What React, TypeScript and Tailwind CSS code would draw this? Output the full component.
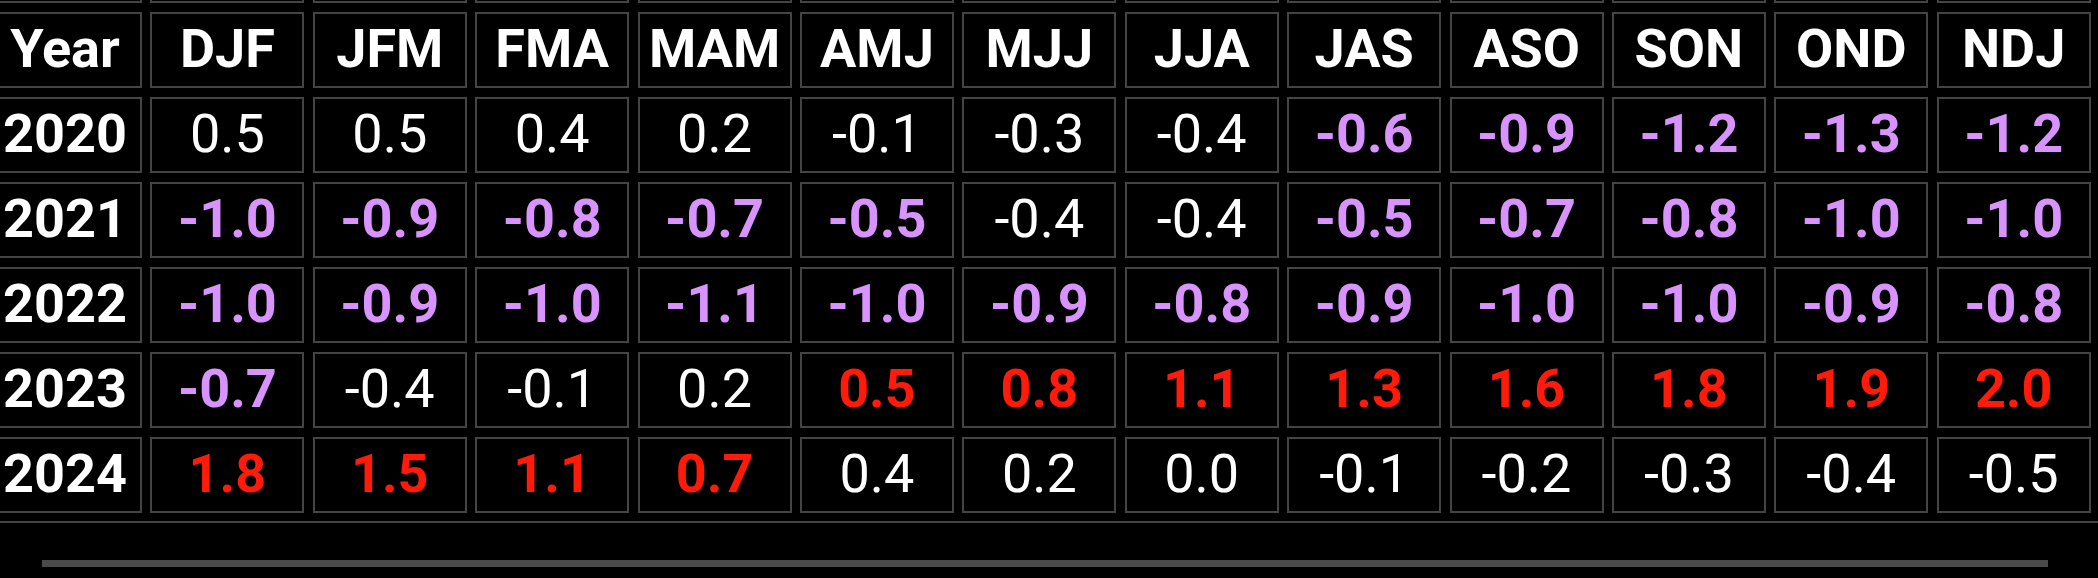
import React from "react";

type Tone = "w" | "c" | "h";

// c = La Niña (cool), h = El Niño (warm), w = neutral
const seasons = ["DJF", "JFM", "FMA", "MAM", "AMJ", "MJJ", "JJA", "JAS", "ASO", "SON", "OND", "NDJ"];

const rows: { year: string; cells: [string, Tone][] }[] = [
  {
    year: "2020",
    cells: [
      ["0.5", "w"], ["0.5", "w"], ["0.4", "w"], ["0.2", "w"], ["-0.1", "w"], ["-0.3", "w"],
      ["-0.4", "w"], ["-0.6", "c"], ["-0.9", "c"], ["-1.2", "c"], ["-1.3", "c"], ["-1.2", "c"],
    ],
  },
  {
    year: "2021",
    cells: [
      ["-1.0", "c"], ["-0.9", "c"], ["-0.8", "c"], ["-0.7", "c"], ["-0.5", "c"], ["-0.4", "w"],
      ["-0.4", "w"], ["-0.5", "c"], ["-0.7", "c"], ["-0.8", "c"], ["-1.0", "c"], ["-1.0", "c"],
    ],
  },
  {
    year: "2022",
    cells: [
      ["-1.0", "c"], ["-0.9", "c"], ["-1.0", "c"], ["-1.1", "c"], ["-1.0", "c"], ["-0.9", "c"],
      ["-0.8", "c"], ["-0.9", "c"], ["-1.0", "c"], ["-1.0", "c"], ["-0.9", "c"], ["-0.8", "c"],
    ],
  },
  {
    year: "2023",
    cells: [
      ["-0.7", "c"], ["-0.4", "w"], ["-0.1", "w"], ["0.2", "w"], ["0.5", "h"], ["0.8", "h"],
      ["1.1", "h"], ["1.3", "h"], ["1.6", "h"], ["1.8", "h"], ["1.9", "h"], ["2.0", "h"],
    ],
  },
  {
    year: "2024",
    cells: [
      ["1.8", "h"], ["1.5", "h"], ["1.1", "h"], ["0.7", "h"], ["0.4", "w"], ["0.2", "w"],
      ["0.0", "w"], ["-0.1", "w"], ["-0.2", "w"], ["-0.3", "w"], ["-0.4", "w"], ["-0.5", "w"],
    ],
  },
];

const toneClass: Record<Tone, string> = {
  w: "text-white font-normal",
  c: "text-[#d993ff] font-bold",
  h: "text-[#ff1a0a] font-bold",
};

function Cell({ children, className = "" }: { children?: React.ReactNode; className?: string }) {
  return (
    <div
      className={`h-[76px] border-2 border-[#444444] bg-black flex items-center justify-center pb-[3px] leading-none ${className}`}
    >
      {children}
    </div>
  );
}

export default function App() {
  return (
    <main
      className="w-[2098px] h-[578px] bg-black overflow-hidden text-[54px]"
      style={{ fontFamily: "Roboto, 'Noto Sans', sans-serif" }}
    >
      <div className="h-[523px] overflow-hidden border-b-2 border-[#444444]">
        <div className="grid grid-cols-[repeat(13,154px)] gap-x-[8.4px] gap-y-[9px] -mt-[73px] -ml-[12px] w-max">
          {/* row scrolled out above the header */}
          {Array.from({ length: 13 }).map((_, i) => (
            <Cell key={`p${i}`} />
          ))}

          <Cell className="text-white font-bold">Year</Cell>
          {seasons.map((s) => (
            <Cell key={s} className="text-white font-bold">
              {s}
            </Cell>
          ))}

          {rows.map((r) => (
            <React.Fragment key={r.year}>
              <Cell className="text-white font-bold">{r.year}</Cell>
              {r.cells.map(([v, t], i) => (
                <Cell key={i} className={toneClass[t]}>
                  {v}
                </Cell>
              ))}
            </React.Fragment>
          ))}
        </div>
      </div>

      {/* horizontal scrollbar */}
      <div className="mt-[37px] ml-[42px] w-[2006px] h-[7px] bg-[#4a4a4a]" />
    </main>
  );
}
